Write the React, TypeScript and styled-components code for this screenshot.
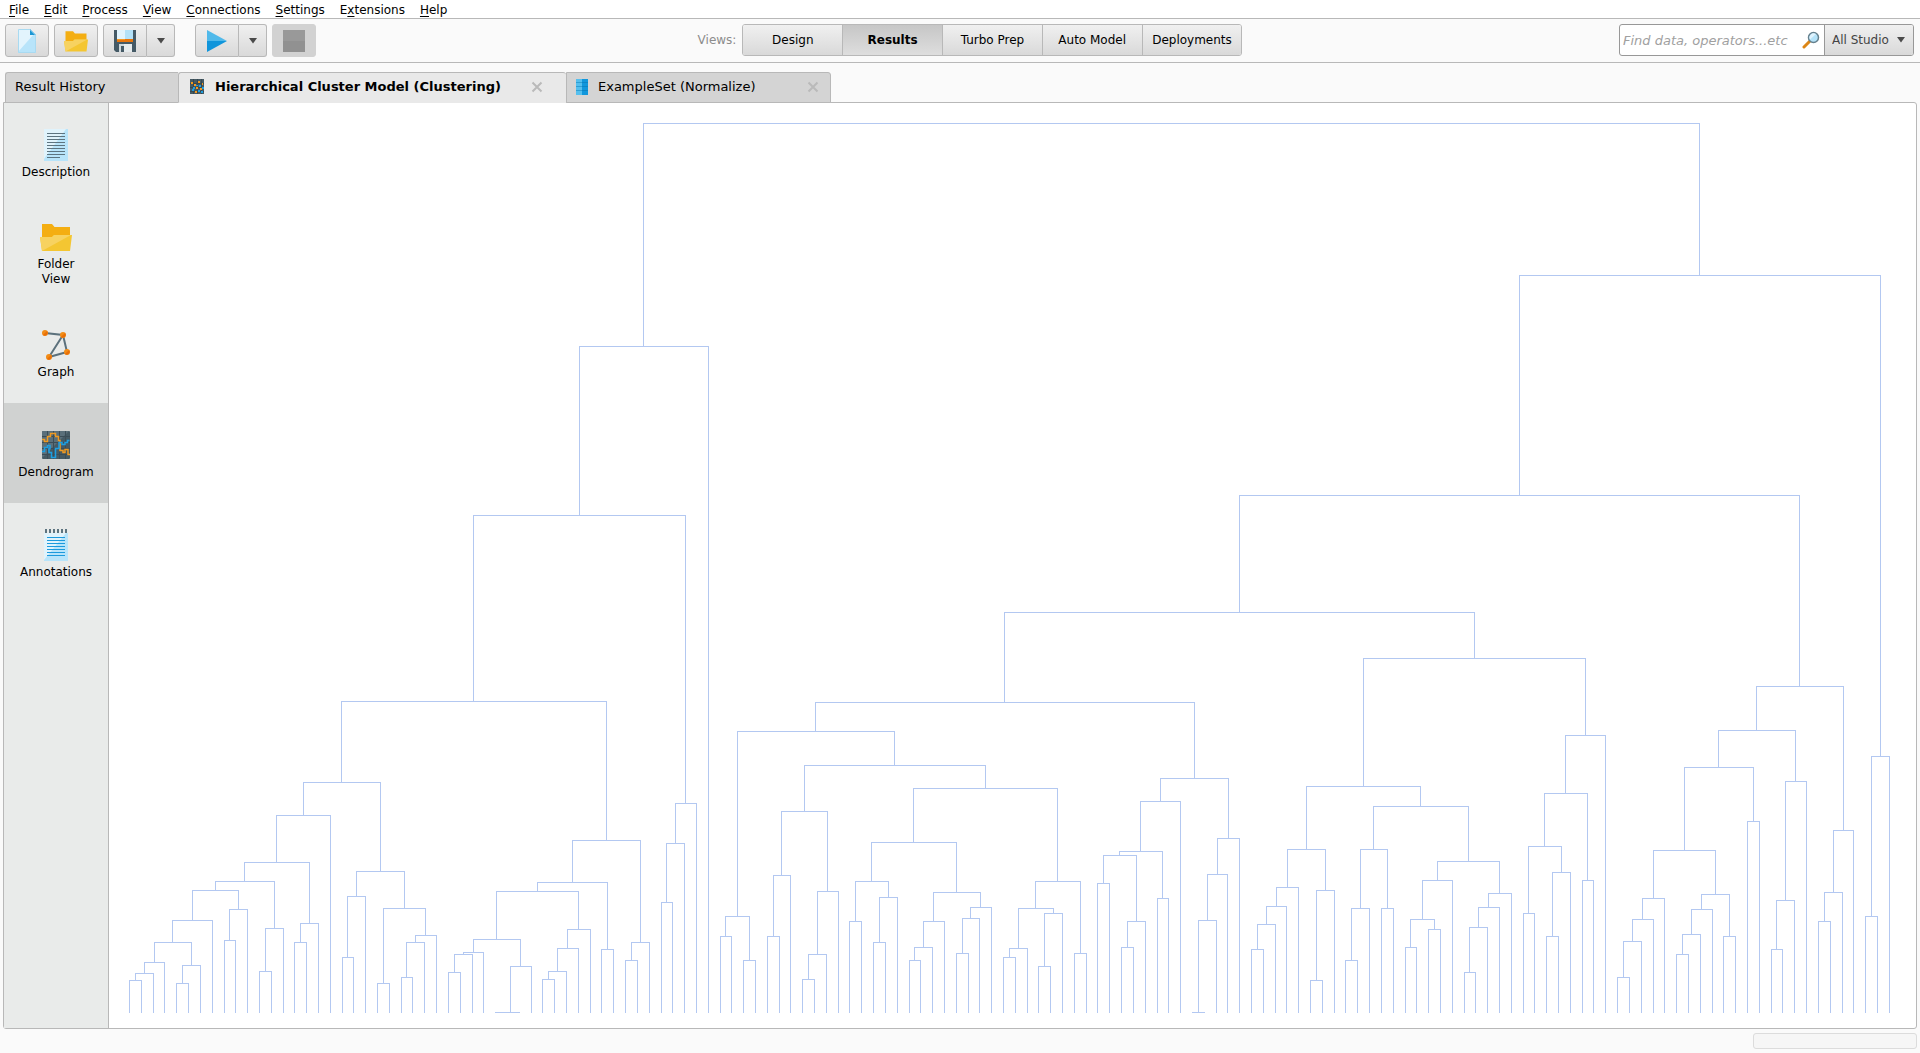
import React from "react";
import styled, { createGlobalStyle, css } from "styled-components";

const line = "#b8b8b8";
const buttonFace = "linear-gradient(#f0f0f0, #d9d9d9)";

const GlobalStyle = createGlobalStyle`
  *, *::before, *::after { box-sizing: border-box; }
  body { margin: 0; background: #fafafa; }
  body, button, input, select {
    font-family: "DejaVu Sans", sans-serif;
    font-size: 12px;
    line-height: 15px;
    color: #000;
  }
  button { margin: 0; padding: 0; border: 0; background: none; }
`;

const Page = styled.div`
  display: flex;
  flex-direction: column;
  height: 100vh;
  min-height: 680px;
  background: #fafafa;
`;

/* ---------- menu bar ---------- */

const MenuBar = styled.nav`
  display: flex;
  align-items: center;
  gap: 15px;
  height: 19px;
  padding: 2px 8px 0 9px;
  background: #fff;
  border-bottom: 1px solid ${line};
`;

const MenuButton = styled.button`
  white-space: nowrap;
  u { text-underline-offset: 2px; text-decoration-thickness: 1px; }
`;

/* ---------- toolbar ---------- */

const Toolbar = styled.header`
  display: flex;
  justify-content: space-between;
  align-items: flex-start;
  height: 44px;
  padding: 5px 6px 0 5px;
  border-bottom: 1px solid ${line};
`;

const ToolGroup = styled.div`
  display: flex;
  gap: 5px;
`;

const SplitButton = styled.div<{ $spaced?: boolean }>`
  display: flex;
  margin-left: ${(p) => (p.$spaced ? "15px" : "0")};
  & > button:first-child { border-radius: 3px 0 0 3px; }
  & > button:last-child { border-radius: 0 3px 3px 0; border-left: 0; }
`;

const ToolButton = styled.button<{ $narrow?: boolean }>`
  display: grid;
  place-items: center;
  width: ${(p) => (p.$narrow ? "28px" : "44px")};
  height: 33px;
  border: 1px solid ${line};
  border-radius: 3px;
  background: ${buttonFace};
  &:disabled { background: #d2d2d2; border-color: #d2d2d2; }
`;

const Views = styled.div`
  display: flex;
  align-items: center;
  gap: 6px;
  margin-left: 5px;
  color: #8c8c8c;
`;

const Segments = styled.div`
  display: flex;
  width: 500px;
  border: 1px solid ${line};
  border-radius: 3px;
  overflow: hidden;
`;

const Segment = styled.button<{ $active?: boolean }>`
  flex: 1 1 0;
  height: 30px;
  border-left: 1px solid ${line};
  background: ${(p) => (p.$active ? "linear-gradient(#c6c6c6, #dedede)" : buttonFace)};
  font-weight: ${(p) => (p.$active ? "bold" : "normal")};
  white-space: nowrap;
  &:first-child { border-left: 0; }
`;

const Search = styled.div`
  display: flex;
  width: 295px;
  height: 32px;
  border: 1px solid #989898;
  border-radius: 3px;
  background: #fff;
  overflow: hidden;
`;

const SearchInput = styled.input`
  flex: 1;
  min-width: 0;
  padding: 0 3px;
  border: 0;
  outline: 0;
  background: none;
  font-size: 13px;
  &::placeholder { color: #a0a0a0; font-style: italic; opacity: 1; }
`;

const SearchButton = styled.button`
  display: grid;
  place-items: center;
  width: 26px;
`;

const Scope = styled.div`
  display: grid;
  width: 89px;
  align-items: center;
  border-left: 1px solid #989898;
  background: ${buttonFace};
  & > * { grid-area: 1 / 1; }
  & > svg { justify-self: end; margin-right: 7px; pointer-events: none; }
`;

const ScopeSelect = styled.select`
  width: 100%;
  height: 30px;
  padding: 0 0 0 7px;
  appearance: none;
  border: 0;
  background: none;
  color: #444;
`;

/* ---------- tabs ---------- */

const Tabs = styled.div`
  position: relative;
  display: flex;
  margin: 9px 4px -1px 5px;
`;

const Tab = styled.div<{ $active?: boolean; $width: number }>`
  display: flex;
  align-items: center;
  width: ${(p) => p.$width}px;
  height: 31px;
  padding: 0 11px 2px 9px;
  border: 1px solid ${line};
  border-right-width: 0;
  border-radius: 3px 0 0 0;
  background: #d4d4d4;
  &:last-child { border-right-width: 1px; border-radius: 0 3px 0 0; }
  ${(p) =>
    p.$active &&
    css`
      padding-left: 10px;
      padding-right: 23px;
      border-bottom-color: #e9e9e9;
      border-radius: 3px 3px 0 0;
      background: #e9e9e9;
      font-weight: bold;
    `}
`;

const TabLabel = styled.button`
  display: flex;
  flex: 1;
  align-items: center;
  gap: 10px;
  font-size: 13px;
  font-weight: inherit;
  white-space: nowrap;
`;

const CloseButton = styled.button`
  display: grid;
  place-items: center;
  width: 12px;
  height: 16px;
`;

/* ---------- result panel ---------- */

const Panel = styled.main`
  display: flex;
  flex: 1;
  min-height: 0;
  margin: 0 3px;
  border: 1px solid ${line};
  border-radius: 0 3px 3px 3px;
  background: #fff;
`;

const Sidebar = styled.nav`
  display: flex;
  flex-direction: column;
  width: 105px;
  border-right: 1px solid ${line};
  background: #e9ebea;
`;

const SideButton = styled.button<{ $active?: boolean }>`
  display: flex;
  flex-direction: column;
  align-items: center;
  justify-content: center;
  gap: 4px;
  height: 100px;
  padding-top: 2px;
  background: ${(p) => (p.$active ? "#d0d2d1" : "transparent")};
  span { max-width: 80px; }
`;

const Plot = styled.section`
  flex: 1;
  min-width: 0;
  svg { display: block; width: 100%; height: 100%; }
`;

const StatusBar = styled.footer`
  display: flex;
  justify-content: flex-end;
  padding: 4px 3px;
`;

const Progress = styled.div`
  width: 164px;
  height: 16px;
  border: 1px solid #dcdcdc;
  border-radius: 3px;
  background: #f6f6f6;
`;

/* ---------- icons ---------- */

const Caret = () => (
  <svg width="10" height="6" viewBox="0 0 10 6">
    <path d="M1 0h8L5 5.500z" fill="#4a4a4a" />
  </svg>
);

const NewIcon = () => (
  <svg width="24" height="24" viewBox="0 0 24 24">
    <path d="M3 0h12l6 6v18H3z" fill="#b8e4fa" />
    <path d="M3 0h12l4 5L3 23z" fill="#e2f4fd" />
    <path d="M15 0l6 6h-6z" fill="#1b96d4" />
    <path d="M3.500.5H15l5.500 5.500v17.500h-17z" fill="none" stroke="#a9daf1" />
  </svg>
);

const FolderIcon = ({ size = 24 }: { size?: number }) => (
  <svg width={size} height={size} viewBox="0 0 32 32">
    <path d="M2 3h10l2.500 3H30V17H2z" fill="#f4ae12" />
    <path d="M0 16h12l2-2h18L30 30H2z" fill="#f4c632" />
    <path d="M0 16h12l2-2h17L2 30z" fill="#f7d260" />
  </svg>
);

const SaveIcon = () => (
  <svg width="22" height="22" viewBox="0 0 22 22">
    <path d="M0 0h22v22H2l-2-2z" fill="#455a66" />
    <path d="M3 0h16v9H3z" fill="#b3e2f9" />
    <path d="M3 0h8v9H3z" fill="#e2f4fd" />
    <path d="M3 9h16v3H3z" fill="#e8760c" />
    <path d="M3 9h8v1H3z" fill="#f59a23" />
    <path d="M5 14h13v8H5z" fill="#cfd8dc" />
    <path d="M10 14h8v8h-8z" fill="#e6ebed" />
    <path d="M7 16h3v6H7z" fill="#455a66" />
  </svg>
);

const RunIcon = () => (
  <svg width="20" height="24" viewBox="0 0 20 24">
    <path d="M0 1l20 11H0z" fill="#50b9ea" />
    <path d="M0 12h20L0 23z" fill="#1095db" />
  </svg>
);

const StopIcon = () => (
  <svg width="22" height="22" viewBox="0 0 22 22">
    <path d="M0 0h22v22H0z" fill="#919191" />
    <path d="M0 0h22v11H0z" fill="#999" />
  </svg>
);

const MagnifierIcon = () => (
  <svg width="18" height="18" viewBox="0 0 18 18">
    <path d="M2 16l6-6" stroke="#dc8616" strokeWidth="3" strokeLinecap="round" />
    <circle cx="11.500" cy="6.500" r="5" fill="#b5e3f9" stroke="#66818e" strokeWidth="1.500" />
    <path d="M8 8.500A4.200 4.200 0 0 1 14 3z" fill="#e0f3fd" />
  </svg>
);

const CloseIcon = () => (
  <svg width="12" height="12" viewBox="0 0 12 12">
    <path d="M1.500 1.500l9 9M10.500 1.500l-9 9" stroke="#bababa" strokeWidth="2" />
  </svg>
);

const ClusterTabIcon = () => (
  <svg width="16" height="16" viewBox="0 0 16 16">
    <path d="M1 0h14v15H1z" fill="#455a64" />
    <path d="M1 4.500h14M1 8.500h14M1 12.500h14M4.500 0v15M8.500 0v15M12.500 0v15" stroke="#37474f" />
    <path d="M2 3h2v2H2zM9 2h2v2H9zM5 5h2v2H5zM13 4h1v2h-1zM7 8h2v2H7zM11 9h2v2h-2zM6 12h2v2H6z" fill="#f39a1e" />
    <path d="M3 10h2v2H3zM7 6h2v1H7zM4 8h2v2H4zM10 6h2v2h-2zM9 11h2v2H9zM12 12h2v2h-2zM13 8h2v2h-2z" fill="#1d9fe0" />
  </svg>
);

const TableTabIcon = () => (
  <svg width="12" height="16" viewBox="0 0 12 16">
    <path d="M0 0h6v16H0z" fill="#55bfee" />
    <path d="M6 0h6v16H6z" fill="#1197dc" />
    <path d="M0 3.500h6M0 7.500h6M0 11.500h6" stroke="#2f9fd3" />
    <path d="M6 3.500h6M6 7.500h6M6 11.500h6" stroke="#0c85c6" />
  </svg>
);

const DescriptionIcon = () => (
  <svg width="32" height="32" viewBox="0 0 32 32">
    <path d="M4 0h24v32H4z" fill="#b8e4fa" />
    <path d="M4 0h22L4 30z" fill="#e0f3fc" />
    <path d="M7 4.500h18M7 7.500h18M7 10.500h18M7 13.500h18M7 16.500h18M7 19.500h18M7 22.500h18M7 25.500h18M7 28.500h13" stroke="#5d7480" />
  </svg>
);

const GraphIcon = () => (
  <svg width="32" height="32" viewBox="0 0 32 32">
    <path d="M5 4l18 2 4 17-18 5L23 6" fill="none" stroke="#5c717c" strokeWidth="2" />
    {[[5, 4], [23, 6], [27, 23], [9, 28]].map(([x, y]) => (
      <g key={`${x}-${y}`}>
        <circle cx={x} cy={y} r="3" fill="#f28c16" />
        <path d={`M${x + 2.100} ${y - 2.100}a3 3 0 0 1-4.200 4.200z`} fill="#e96f08" />
      </g>
    ))}
  </svg>
);

const DendrogramIcon = () => (
  <svg width="32" height="32" viewBox="0 0 32 32">
    <rect x="2" y="2" width="28" height="28" rx="1" fill="#455a64" />
    <path d="M3 2h26L2 29V3z" fill="#5a6f7a" />
    <path d="M2 7.500h28M2 13.500h28M2 19.500h28M2 25.500h28M7.500 2v28M13.500 2v28M19.500 2v28M25.500 2v28" stroke="#3b4d57" />
    <path d="M2 10.500h2.500v2h3v-5h3v-3h5v3h3v4h1.500v10h3v2h2v-3h3v5h2" fill="none" stroke="#ef9a22" strokeWidth="1.500" />
    <path d="M2 22.500h2.500v-4h3v-2h2.500v3h-1v4h2.500v5h4v-9h3.500v-6h3v2h3v-2h2.500v-2h2" fill="none" stroke="#1c9fe2" strokeWidth="1.500" />
  </svg>
);

const AnnotationsIcon = () => (
  <svg width="32" height="32" viewBox="0 0 32 32">
    <path d="M4 4h24v28H4z" fill="#b8e4fa" />
    <path d="M4 4h22L4 31z" fill="#e0f3fc" />
    <path d="M6 0v4M10 0v4M14 0v4M18 0v4M22 0v4M26 0v4" stroke="#5d7480" strokeWidth="2" />
    <path d="M7 8.500h18M7 11.500h18M7 14.500h18M7 17.500h18M7 20.500h18M7 23.500h18M7 26.500h18" stroke="#1c9add" />
  </svg>
);

/* ---------- dendrogram ---------- */

// A cluster is either a single example (0) or a merge: [level, left, right].
type Cluster = 0 | [number, Cluster, Cluster];

const BASE = 1012;

const firstCluster: Cluster =
  [346,
    [515,
      [701,
        [782,
          [815,
            [862,
              [881,
                [890,
                  [920,
                    [942, [962, [973, [980, 0, 0], 0], 0], [965, [983, 0, 0], 0]],
                    0],
                  [909, [940, 0, 0], 0]],
                [928, [971, 0, 0], 0]],
              [923, [942, 0, 0], 0]],
            0],
          [871,
            [896, [957, 0, 0], 0],
            [908, [983, 0, 0], [935, [942, [977, 0, 0], 0], 0]]]],
        [840,
          [882,
            [891,
              [939,
                [952, [954, [972, 0, 0], 0], 0],
                [966, [BASE, [BASE, 0, 0], 0], 0]],
              [929, [948, [971, [979, 0, 0], 0], 0], 0]],
            [949, 0, 0]],
          [942, [960, 0, 0], 0]]],
      [803, [843, [902, 0, 0], 0], 0]],
    0];

const secondCluster: Cluster =
  [702,
    [731,
      [916, [936, 0, 0], [960, 0, 0]],
      [765,
        [811,
          [875, [936, 0, 0], 0],
          [891, [954, [979, 0, 0], 0], 0]],
        [788,
          [842,
            [881, [921, 0, 0], [897, [942, 0, 0], 0]],
            [892,
              [921, [947, [960, 0, 0], 0], 0],
              [907, [918, [953, 0, 0], 0], 0]]],
          [881,
            [908,
              [948, [957, 0, 0], 0],
              [913, [966, 0, 0], 0]],
            [953, 0, 0]]]]],
    [778,
      [801,
        [851,
          [855, [883, 0, 0], [921, [947, 0, 0], 0]],
          [898, 0, 0]],
        0],
      [838, [874, [920, [BASE, 0, 0], 0], 0], 0]]];

const thirdCluster: Cluster =
  [658,
    [786,
      [849,
        [887, [906, [924, [949, 0, 0], 0], 0], 0],
        [890, [980, 0, 0], 0]],
      [806,
        [849, [908, [960, 0, 0], 0], [908, 0, 0]],
        [861,
          [880, [919, [947, 0, 0], [929, 0, 0]], 0],
          [893, [907, [927, [972, 0, 0], 0], 0], 0]]]],
    [735,
      [793,
        [846, [913, 0, 0], [872, [936, 0, 0], 0]],
        [880, 0, 0]],
      0]];

const fourthCluster: Cluster =
  [686,
    [730,
      [767,
        [850,
          [898, [919, [941, [977, 0, 0], 0], 0], 0],
          [894, [909, [934, [954, 0, 0], 0], 0], [936, 0, 0]]],
        [821, 0, 0]],
      [781, [900, [949, 0, 0], 0], 0]],
    [830, [892, [921, 0, 0], 0], 0]];

const model: Cluster =
  [123,
    firstCluster,
    [275,
      [495, [612, secondCluster, thirdCluster], fourthCluster],
      [756, [916, 0, 0], 0]]];

// Leaves are evenly spaced; a merge hangs from the middle of its two branches.
function traceTree(root: Cluster): string {
  const first = 129.55;
  const step = 11.81;
  let count = 0;
  const parts: string[] = [];

  const walk = (node: Cluster): { x: number; y: number } => {
    if (node === 0) return { x: Math.floor(first + step * count++), y: BASE };
    const [level, left, right] = node;
    const a = walk(left);
    const b = walk(right);
    parts.push(`M${a.x + 0.5} ${a.y + 1}V${level + 0.5}H${b.x + 0.5}V${b.y + 1}`);
    return { x: Math.floor((a.x + b.x) / 2), y: level };
  };

  walk(root);
  return parts.join("");
}

const treePath = traceTree(model);

const Dendrogram = () => (
  <svg viewBox="109 103 1807 925" preserveAspectRatio="none" role="img" aria-label="Dendrogram">
    <path
      d={treePath}
      fill="none"
      stroke="#b3c8f1"
      strokeLinecap="butt"
      shapeRendering="crispEdges"
      vectorEffect="non-scaling-stroke"
    />
  </svg>
);

/* ---------- content ---------- */

const menus: [string, string, string][] = [
  ["", "F", "ile"],
  ["", "E", "dit"],
  ["", "P", "rocess"],
  ["", "V", "iew"],
  ["", "C", "onnections"],
  ["", "S", "ettings"],
  ["E", "x", "tensions"],
  ["", "H", "elp"],
];

const views = ["Design", "Results", "Turbo Prep", "Auto Model", "Deployments"];

const sections = [
  { name: "Description", icon: <DescriptionIcon /> },
  { name: "Folder View", icon: <FolderIcon size={32} />, lines: ["Folder", "View"] },
  { name: "Graph", icon: <GraphIcon /> },
  { name: "Dendrogram", icon: <DendrogramIcon /> },
  { name: "Annotations", icon: <AnnotationsIcon /> },
];

export default function App() {
  return (
    <Page>
      <GlobalStyle />
      <MenuBar>
        {menus.map(([before, key, after]) => (
          <MenuButton key={before + key + after}>
            {before}
            <u>{key}</u>
            {after}
          </MenuButton>
        ))}
      </MenuBar>

      <Toolbar>
        <ToolGroup>
          <ToolButton aria-label="New process"><NewIcon /></ToolButton>
          <ToolButton aria-label="Open process"><FolderIcon /></ToolButton>
          <SplitButton>
            <ToolButton aria-label="Save process"><SaveIcon /></ToolButton>
            <ToolButton $narrow aria-label="Save options"><Caret /></ToolButton>
          </SplitButton>
          <SplitButton $spaced>
            <ToolButton aria-label="Run process"><RunIcon /></ToolButton>
            <ToolButton $narrow aria-label="Run options"><Caret /></ToolButton>
          </SplitButton>
          <ToolButton disabled aria-label="Stop process"><StopIcon /></ToolButton>
        </ToolGroup>

        <Views>
          <span>Views:</span>
          <Segments>
            {views.map((view) => (
              <Segment key={view} $active={view === "Results"}>{view}</Segment>
            ))}
          </Segments>
        </Views>

        <Search>
          <SearchInput aria-label="Search" placeholder="Find data, operators...etc" />
          <SearchButton aria-label="Start search"><MagnifierIcon /></SearchButton>
          <Scope>
            <ScopeSelect aria-label="Search scope">
              <option>All Studio</option>
            </ScopeSelect>
            <Caret />
          </Scope>
        </Search>
      </Toolbar>

      <Tabs>
        <Tab $width={173}>
          <TabLabel>Result History</TabLabel>
        </Tab>
        <Tab $width={388} $active>
          <TabLabel><ClusterTabIcon />Hierarchical Cluster Model (Clustering)</TabLabel>
          <CloseButton aria-label="Close Hierarchical Cluster Model"><CloseIcon /></CloseButton>
        </Tab>
        <Tab $width={265}>
          <TabLabel><TableTabIcon />ExampleSet (Normalize)</TabLabel>
          <CloseButton aria-label="Close ExampleSet"><CloseIcon /></CloseButton>
        </Tab>
      </Tabs>

      <Panel>
        <Sidebar>
          {sections.map(({ name, icon, lines }) => (
            <SideButton key={name} $active={name === "Dendrogram"}>
              {icon}
              <span>
                {lines ? <>{lines[0]}<br />{lines[1]}</> : name}
              </span>
            </SideButton>
          ))}
        </Sidebar>
        <Plot>
          <Dendrogram />
        </Plot>
      </Panel>

      <StatusBar>
        <Progress role="progressbar" aria-label="Background activity" />
      </StatusBar>
    </Page>
  );
}
